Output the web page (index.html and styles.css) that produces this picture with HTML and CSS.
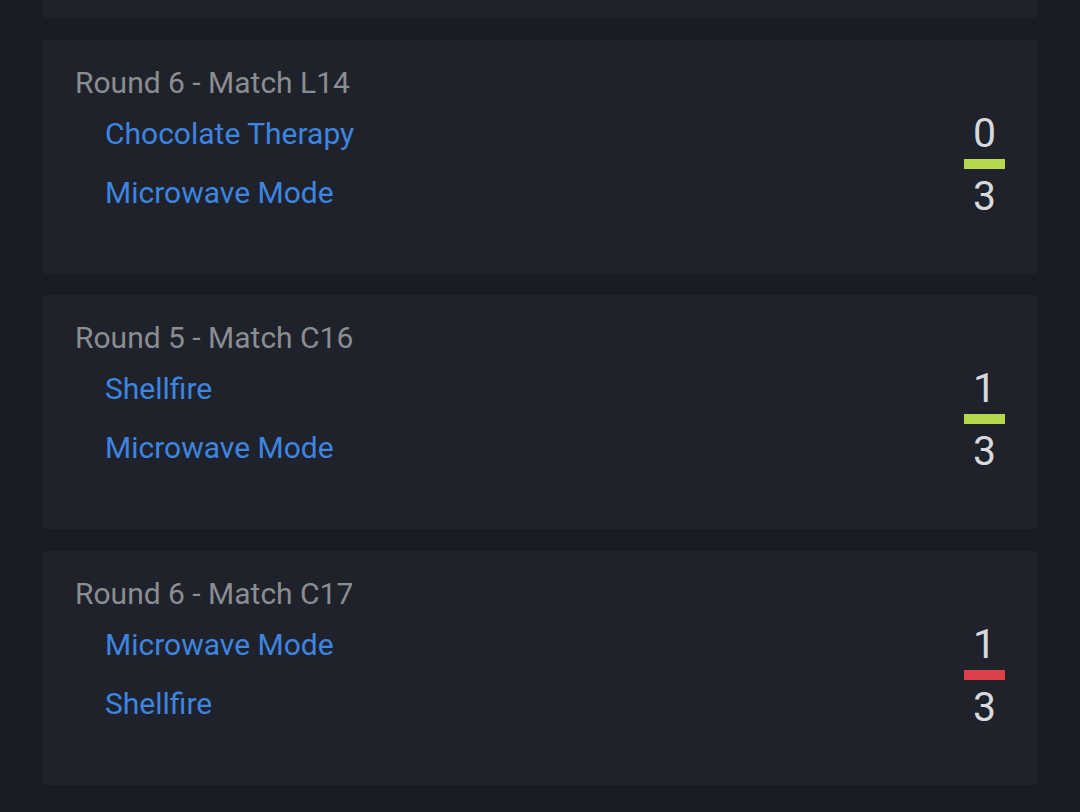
FILE: index.html
```html
<!DOCTYPE html>
<html>
<head>
<meta charset="utf-8">
<link rel="stylesheet" href="styles.css">
</head>
<body>
<div class="list">
  <div class="card card-cut"></div>
  <div class="card">
    <div class="title">Round 6 - Match L14</div>
    <div class="body">
      <div class="teams">
        <a class="team">Chocolate Therapy</a>
        <a class="team">Microwave Mode</a>
      </div>
      <div class="score">
        <span class="num">0</span>
        <span class="bar win"></span>
        <span class="num">3</span>
      </div>
    </div>
  </div>
  <div class="card">
    <div class="title">Round 5 - Match C16</div>
    <div class="body">
      <div class="teams">
        <a class="team">Shellfire</a>
        <a class="team">Microwave Mode</a>
      </div>
      <div class="score">
        <span class="num">1</span>
        <span class="bar win"></span>
        <span class="num">3</span>
      </div>
    </div>
  </div>
  <div class="card">
    <div class="title">Round 6 - Match C17</div>
    <div class="body">
      <div class="teams">
        <a class="team">Microwave Mode</a>
        <a class="team">Shellfire</a>
      </div>
      <div class="score">
        <span class="num">1</span>
        <span class="bar loss"></span>
        <span class="num">3</span>
      </div>
    </div>
  </div>
</div>
</body>
</html>
```
FILE: styles.css
```css
html, body {
  margin: 0;
  padding: 0;
  background: #191c24;
  font-family: Roboto, "Liberation Sans", sans-serif;
}
.list {
  display: flex;
  flex-direction: column;
  gap: 21.5px;
  padding: 0 43px;
  margin-top: -10px;
}
.card {
  background: #1f222a;
  height: 234px;
  box-sizing: border-box;
  padding: 25px 32px 0 32px;
}
.card-cut {
  height: 28px;
  padding: 0;
}
.title {
  color: #8a8d92;
  font-size: 30px;
  line-height: 36px;
}
.body {
  display: flex;
  align-items: flex-start;
  justify-content: space-between;
}
.teams {
  display: flex;
  flex-direction: column;
  padding-left: 30px;
  padding-top: 15px;
  gap: 23px;
}
.team {
  color: #3d85e0;
  font-size: 30px;
  line-height: 36px;
}
.score {
  display: flex;
  flex-direction: column;
  align-items: center;
  width: 41px;
  margin-top: 12px;
}
.num {
  color: #d7d9dc;
  font-size: 41px;
  line-height: 40px;
}
.bar {
  width: 41px;
  height: 10px;
  margin: 6px 0 7px 0;
}
.win { background: #b6d84e; }
.loss { background: #dc4049; }
```
